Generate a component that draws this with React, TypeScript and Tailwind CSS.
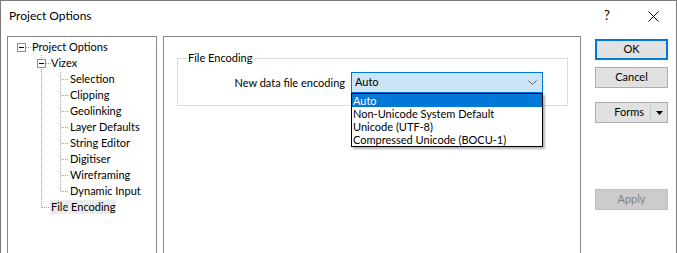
import React from "react";

const dot = "#a0a0a0";

function TreeLines() {
  const childYs = [0, 1, 2, 3, 4, 5, 6, 7, 8].map((k) => 42.5 + 16 * k);
  return (
    <svg
      className="absolute left-0 top-0"
      width="148"
      height="260"
      shapeRendering="crispEdges"
    >
      <rect x="9.5" y="6.5" width="8" height="8" fill="#fcfcfc" stroke="#919191" />
      <line x1="11" y1="10.5" x2="16" y2="10.5" stroke="#000" />
      <line x1="18" y1="10.5" x2="23" y2="10.5" stroke={dot} strokeDasharray="1 1" />
      <line x1="33.5" y1="18" x2="33.5" y2="22" stroke={dot} strokeDasharray="1 1" />
      <line x1="33.5" y1="32" x2="33.5" y2="171" stroke={dot} strokeDasharray="1 1" />
      <line x1="34" y1="170.5" x2="41" y2="170.5" stroke={dot} strokeDasharray="1 1" />
      <rect x="29.5" y="22.5" width="8" height="8" fill="#fcfcfc" stroke="#919191" />
      <line x1="31" y1="26.5" x2="36" y2="26.5" stroke="#000" />
      <line x1="38" y1="26.5" x2="43" y2="26.5" stroke={dot} strokeDasharray="1 1" />
      <line x1="52.5" y1="35" x2="52.5" y2="155" stroke={dot} strokeDasharray="1 1" />
      {childYs.map((y) => (
        <line key={y} x1="53" y1={y} x2="61" y2={y} stroke={dot} strokeDasharray="1 1" />
      ))}
    </svg>
  );
}

function Row({ indent, label, selected }: { indent: number; label: string; selected?: boolean }) {
  return (
    <div className="h-[16px] flex items-center" style={{ paddingLeft: indent }}>
      <span
        className={
          "h-[14px] leading-[14px] px-[1px] whitespace-nowrap " +
          (selected ? "bg-[#ebebeb]" : "")
        }
      >
        {label}
      </span>
    </div>
  );
}

function Btn({ children, primary }: { children: React.ReactNode; primary?: boolean }) {
  return (
    <div
      className={
        "h-[21px] w-[73px] flex items-center justify-center bg-[#e1e1e1] text-black " +
        (primary ? "border-2 border-[#0078d7]" : "border border-[#adadad]")
      }
    >
      {children}
    </div>
  );
}

export default function App() {
  const children = [
    "Selection",
    "Clipping",
    "Geolinking",
    "Layer Defaults",
    "String Editor",
    "Digitiser",
    "Wireframing",
    "Dynamic Input",
  ];
  return (
    <div className="w-[677px] h-[253px] overflow-hidden bg-white border border-b-0 border-[#7a7a7a] flex flex-col font-['Lato',sans-serif] text-[11px] text-black">
      <div className="h-[35px] shrink-0 flex items-center pl-[8px] text-[12px]">
        <span className="flex-1 pb-[5px]">Project Options</span>
        <span className="w-[46px] text-center pb-[5px] text-[13px]">?</span>
        <span className="w-[46px] flex justify-center pb-[5px]">
          <svg width="11" height="11" viewBox="0 0 11 11">
            <path d="M0.5 0.5 L10.5 10.5 M10.5 0.5 L0.5 10.5" stroke="#000" strokeWidth="1" />
          </svg>
        </span>
      </div>
      <div className="flex pl-[6px]">
        <div className="relative w-[150px] h-[300px] shrink-0 border border-[#828790] pt-[2px]">
          <TreeLines />
          <Row indent={23} label="Project Options" />
          <Row indent={42} label="Vizex" />
          {children.map((c) => (
            <Row key={c} indent={61} label={c} />
          ))}
          <Row indent={42} label="File Encoding" selected />
        </div>
        <div className="ml-[6px] w-[418px] h-[300px] shrink-0 border border-[#828790] pl-[13px] pt-[21px]">
          <div className="relative w-[391px] h-[48px] border border-[#dcdcdc] pt-[13px]">
            <span className="absolute left-[9px] top-[-9px] bg-white px-[1px] leading-[16px]">
              File Encoding
            </span>
            <div className="flex items-center">
              <div className="w-[167px] text-right whitespace-nowrap leading-[16px]">
                New data file encoding
              </div>
              <div className="ml-[6px] relative w-[192px] h-[21px] border border-[#0078d7] bg-[#cce4f7] flex items-center pl-[3px]">
                <span className="flex-1">Auto</span>
                <svg className="mr-[5px]" width="9" height="6" viewBox="0 0 9 6">
                  <path d="M0.5 0.5 L4.5 4.5 L8.5 0.5" fill="none" stroke="#606060" strokeWidth="1" />
                </svg>
                <div className="absolute left-[-1px] top-[20px] w-[192px] border border-black bg-white shadow-[2px_2px_2px_rgba(0,0,0,0.3)] z-10">
                  <div className="h-[13px] leading-[13px] pl-[1px] bg-[#0078d7] text-white">Auto</div>
                  <div className="h-[13px] leading-[13px] pl-[1px]">Non-Unicode System Default</div>
                  <div className="h-[13px] leading-[13px] pl-[1px]">Unicode (UTF-8)</div>
                  <div className="h-[13px] leading-[13px] pl-[1px]">Compressed Unicode (BOCU-1)</div>
                </div>
              </div>
            </div>
          </div>
        </div>
        <div className="ml-[14px] pt-[3px] flex flex-col">
          <Btn primary>OK</Btn>
          <div className="h-[7px]" />
          <Btn>Cancel</Btn>
          <div className="h-[14px]" />
          <div className="h-[21px] w-[73px] flex items-center bg-[#e1e1e1] border border-[#adadad]">
            <span className="flex-1 text-right pr-[6px]">Forms</span>
            <span className="h-[15px] w-px bg-[#c8c8c8]" />
            <span className="w-[16px] flex justify-center">
              <svg width="7" height="4" viewBox="0 0 7 4">
                <path d="M0 0 L7 0 L3.5 4 Z" fill="#000" />
              </svg>
            </span>
          </div>
          <div className="h-[66px]" />
          <div className="h-[21px] w-[73px] flex items-center justify-center bg-[#cccccc] border border-[#bfbfbf] text-[#838383]">
            Apply
          </div>
        </div>
      </div>
    </div>
  );
}
